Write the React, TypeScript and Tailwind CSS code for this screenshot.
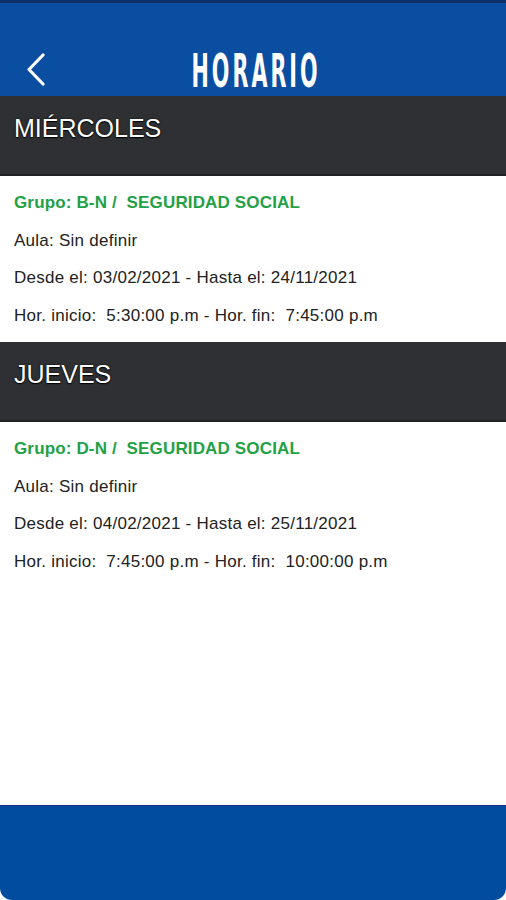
import React from 'react';

type Clase = {
  grupo: string;
  materia: string;
  aula: string;
  desde: string;
  hasta: string;
  inicio: string;
  fin: string;
};

const horario: { dia: string; clases: Clase[] }[] = [
  {
    dia: 'MIÉRCOLES',
    clases: [
      {
        grupo: 'B-N',
        materia: 'SEGURIDAD SOCIAL',
        aula: 'Sin definir',
        desde: '03/02/2021',
        hasta: '24/11/2021',
        inicio: '5:30:00 p.m',
        fin: '7:45:00 p.m',
      },
    ],
  },
  {
    dia: 'JUEVES',
    clases: [
      {
        grupo: 'D-N',
        materia: 'SEGURIDAD SOCIAL',
        aula: 'Sin definir',
        desde: '04/02/2021',
        hasta: '25/11/2021',
        inicio: '7:45:00 p.m',
        fin: '10:00:00 p.m',
      },
    ],
  },
];

export default function App() {
  return (
    <div className="h-[900px] w-full flex flex-col bg-white font-['Liberation_Sans',Arial,sans-serif] overflow-hidden">
      {/* header */}
      <div className="h-[96px] shrink-0 bg-[#0a4ea2] border-t-[3px] border-[#0b2f66] relative">
        <button className="absolute left-[24px] top-[47px] text-white">
          <svg width="24" height="36" viewBox="0 0 24 36" fill="none">
            <path d="M19 5 L5 19.5 L19 34" stroke="white" strokeWidth="3.2" strokeLinecap="round" strokeLinejoin="round" />
          </svg>
        </button>
        <div className="flex justify-center pt-[45px] pl-[6px]">
          <h1 className="text-white text-[46px] leading-none font-bold font-['DejaVu_Sans_Condensed','DejaVu_Sans',sans-serif] tracking-[6px] scale-x-[0.5]">
            HORARIO
          </h1>
        </div>
      </div>

      <div className="flex-1">
        {horario.map((d) => (
          <div key={d.dia}>
            <div className="h-[80px] bg-[#2e3033] border-b-2 border-[#1f2022] px-[14px] pt-[20px]">
              <h2 className="text-white text-[25px] leading-[25px] [text-shadow:0_0_2px_#000,0_1px_1px_#000]">
                {d.dia}
              </h2>
            </div>
            {d.clases.map((c, i) => (
              <div key={i} className="px-[14px] py-[8px] text-[17px] text-[#222] tracking-[0.25px]">
                <p className="h-[37.5px] flex items-center font-bold text-[#1fa146] tracking-[0.15px]">
                  Grupo: {c.grupo} /&nbsp; {c.materia}
                </p>
                <p className="h-[37.5px] flex items-center">Aula: {c.aula}</p>
                <p className="h-[37.5px] flex items-center">
                  Desde el: {c.desde} - Hasta el: {c.hasta}
                </p>
                <p className="h-[37.5px] flex items-center whitespace-pre">
                  Hor. inicio:  {c.inicio} - Hor. fin:  {c.fin}
                </p>
              </div>
            ))}
          </div>
        ))}
      </div>

      {/* footer */}
      <div className="h-[95px] shrink-0 bg-[#024c9f] border-t border-[#1a2f8a] rounded-b-[12px]" />
    </div>
  );
}
